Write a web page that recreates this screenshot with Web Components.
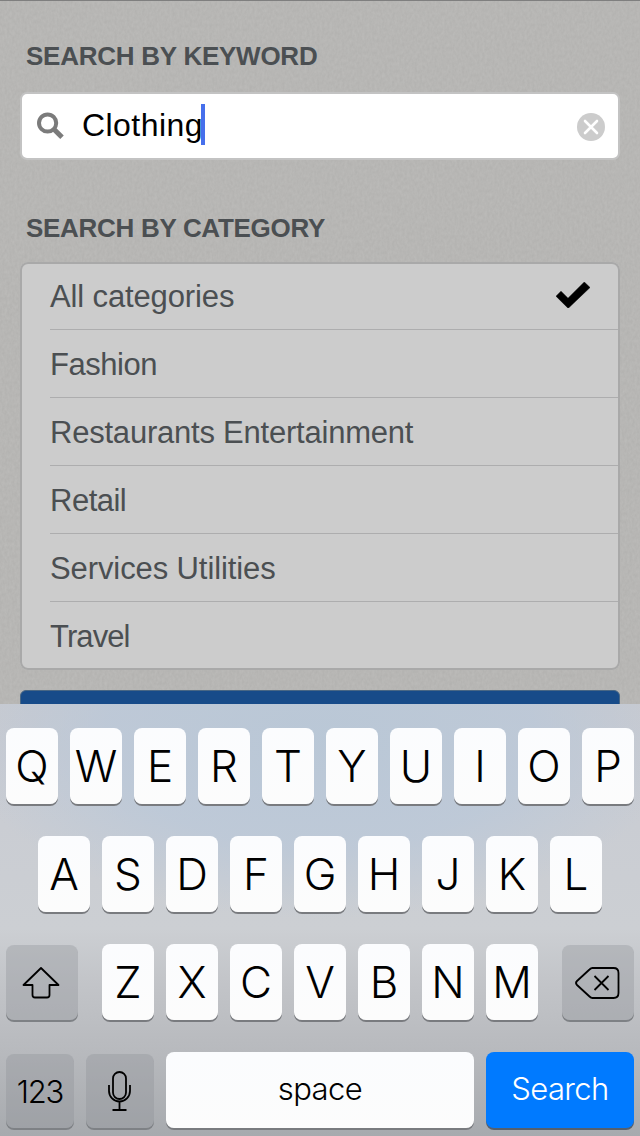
<!DOCTYPE html>
<html lang="en">
<head>
<meta charset="utf-8">
<title>Search</title>
<style>
html, body { margin: 0; height: 1136px; overflow: hidden; background: #b7b6b4; }
body { font-family: "Liberation Sans", Arial, sans-serif; }
</style>
</head>
<body>
<search-screen></search-screen>
<script>
const define = (name, html, setup) => customElements.define(name, class extends HTMLElement {
  constructor() {
    super();
    this.attachShadow({ mode: "open" }).innerHTML = html;
  }
  connectedCallback() { if (setup) setup.call(this, this.shadowRoot); }
});

define("paper-texture", `
<style>:host{display:block;position:absolute;inset:0;z-index:-1}svg{display:block;width:100%;height:100%}</style>
<svg><filter id="n" x="0" y="0" width="100%" height="100%" color-interpolation-filters="sRGB">
<feTurbulence type="fractalNoise" baseFrequency=".4 .26" numOctaves="3" seed="4"/>
<feColorMatrix values="0.045 0 0 0 0.695  0.045 0 0 0 0.692  0.045 0 0 0 0.684  0 0 0 0 1"/></filter>
<rect width="100%" height="100%" fill="#b7b6b4" filter="url(#n)"/></svg>`);

define("section-title", `
<style>:host{display:block;box-sizing:border-box;height:30px;line-height:30px;padding-left:26px;font-size:26px;font-weight:bold;color:#4b4f52;white-space:nowrap;letter-spacing:var(--track,0)}</style><slot></slot>`);

define("search-field", `
<style>
:host{display:flex;box-sizing:border-box;align-items:center;height:68px;margin:0 20px;padding:0 13px 0 15px;border:2px solid #c3c3c3;border-radius:7px;background:#fff;color:#000;font-size:32px}
.glass{width:28px;height:28px;margin-right:17px}
.text{letter-spacing:var(--track,0);line-height:40px;padding-bottom:3px}
.caret{width:4px;height:41px;background:#466fec;margin:0 auto 3px -2px}
.clear{width:28px;height:28px;margin-top:2px}
</style>
<svg class="glass" viewBox="0 0 28 28"><circle cx="10.6" cy="11" r="8.6" fill="none" stroke="#7b7b7b" stroke-width="4"/><path d="M16.7 17 25 25.3" stroke="#7b7b7b" stroke-width="5"/></svg>
<span class="text"><slot></slot></span><span class="caret"></span>
<svg class="clear" viewBox="0 0 28 28"><circle cx="14" cy="14" r="14" fill="#ccc"/><path d="M8 8 20 20M20 8 8 20" stroke="#fff" stroke-width="2.6" stroke-linecap="round"/></svg>`);

define("category-list", `
<style>:host{display:grid;grid-auto-rows:68px;margin:0 20px;border-radius:8px;background:#ccc;box-shadow:inset 0 0 0 2px #a9a9a9}</style><slot></slot>`);

define("category-row", `
<style>
:host{display:flex;box-sizing:border-box;align-items:center;justify-content:space-between;margin:0 2px 0 30px;padding-right:28px;border-bottom:1px solid #adadae;font-size:31px;color:#4b4f52;white-space:nowrap;letter-spacing:var(--track,0)}
:host(:last-child){border-bottom-color:transparent}
span{padding-top:2px}
svg{display:none;width:34px;height:26px;margin-top:-1px}
:host([selected]) svg{display:block}
</style>
<span><slot></slot></span><svg viewBox="0 0 34 26"><path d="M0 14.2 5 9.200 12 16.200 28.300 0 34 5.500 12.200 26.300Z" fill="#000" stroke="#000" stroke-width=".5"/></svg>`);

define("submit-bar", `
<style>:host{display:block;box-sizing:border-box;height:80px;margin:0 20px;border:1px solid #496784;border-radius:6px;background:#174b89}</style>`);

define("key-cap", `
<style>
:host{display:flex;box-sizing:border-box;width:var(--w,52px);height:76px;align-items:center;justify-content:center;border-radius:8px;background:linear-gradient(#fbfcfe,#fcfcfc);box-shadow:0 2px 0 #797b7f;color:#000;font:270 44px Inter,"Liberation Sans",sans-serif;white-space:nowrap}
:host([dark]){margin-top:1px;height:75px;background:rgba(140,144,150,.34);box-shadow:0 2px 0 #7e8185}
:host([low]){margin-top:2px;height:74px;font-size:31px}
:host([word]){font-size:31px}
:host([blue]){background:#007aff;color:#fff;box-shadow:0 2px 0 #55606e}
span{display:block;position:relative;top:var(--dy,0px);letter-spacing:var(--track,0)}
</style><span><slot></slot></span>`);

const icons = {
  shift: `<svg width="40" height="36" viewBox="0.5 0 40 36"><path d="M19.5 3 37 20H28V30Q28 32.5 25.5 32.5H13.5Q11 32.5 11 30V20H2Z"/></svg>`,
  mic: `<svg width="26" height="42" viewBox="1 0 26 42"><rect x="7" y="2" width="13" height="27" rx="6.5"/><path d="M3 15V21A10.500 10.500 0 0 0 24 21V15M13.500 32V40M6.500 40H20.500"/></svg>`,
  back: `<svg width="46" height="34" viewBox="0.5 0 46 34"><path d="M18 2H39Q44 2 44 7V27Q44 32 39 32H18Q16.500 32 15 30.500L2.500 19Q.5 17 2.500 15L15 3.500Q16.500 2 18 2ZM20 10 34 24M34 10 20 24"/></svg>`
};
define("key-icon", `<style>:host{display:block}svg{display:block;overflow:visible;fill:none;stroke:#000;stroke-width:1.8;stroke-linejoin:round}</style><div></div>`, function (root) {
  root.querySelector("div").innerHTML = icons[this.getAttribute("name")];
});

define("key-row", `
<style>:host{display:flex;justify-content:center;gap:12px;height:76px}</style><slot></slot>`);

const caps = s => [...s].map(c => `<key-cap>${c}</key-cap>`).join("");
define("soft-keyboard", `
<style>
:host{display:flex;box-sizing:border-box;flex-direction:column;gap:32px;position:absolute;left:0;right:0;top:704px;height:432px;padding-top:24px;
background:radial-gradient(ellipse 360px 180px at 50% 35px,rgba(184,199,215,.9),rgba(186,200,217,.75) 60%,transparent),linear-gradient(#c8cad0 0,#cacdd3 120px,#cccfd3 225px,#c2c4c8 280px,#b7b9bd 350px,#a7aaae 432px)}
.gap{width:0}
</style>
<key-row>${caps("QWERTYUIOP")}</key-row>
<key-row>${caps("ASDFGHJKL")}</key-row>
<key-row><key-cap dark style="--w:72px"><key-icon name="shift"></key-icon></key-cap><i class="gap"></i>${caps("ZXCVBNM")}<i class="gap"></i><key-cap dark style="--w:72px"><key-icon name="back"></key-icon></key-cap></key-row>
<key-row><key-cap dark low style="--w:68px;--track:-1.2px;--dy:0px">123</key-cap><key-cap dark low style="--w:68px"><key-icon name="mic"></key-icon></key-cap><key-cap word style="--w:308px;--track:-.6px;--dy:-2px">space</key-cap><key-cap word blue style="--w:148px;--track:-.6px;--dy:-2px">Search</key-cap></key-row>`);

define("search-screen", `
<style>
:host{display:block;box-sizing:border-box;position:relative;z-index:0;width:640px;height:1136px;overflow:hidden;border-top:1px solid #7f7f7f}
main{display:flex;flex-direction:column;padding-top:40px}
search-field{margin-top:21px}
.second{margin-top:53px}
category-list{margin-top:19px}
submit-bar{margin-top:20px}
soft-keyboard{margin-top:-1px}
</style>
<paper-texture></paper-texture>
<main>
<section-title style="--track:-.25px">SEARCH BY KEYWORD</section-title>
<search-field style="--track:.45px">Clothing</search-field>
<section-title class="second" style="--track:-.3px">SEARCH BY CATEGORY</section-title>
<category-list>
<category-row selected style="--track:-.13px">All categories</category-row>
<category-row style="--track:-.45px">Fashion</category-row>
<category-row style="--track:-.22px">Restaurants Entertainment</category-row>
<category-row style="--track:-.5px">Retail</category-row>
<category-row style="--track:-.1px">Services Utilities</category-row>
<category-row style="--track:-.9px">Travel</category-row>
</category-list>
<submit-bar></submit-bar>
</main>
<soft-keyboard></soft-keyboard>`);
</script>
</body>
</html>
